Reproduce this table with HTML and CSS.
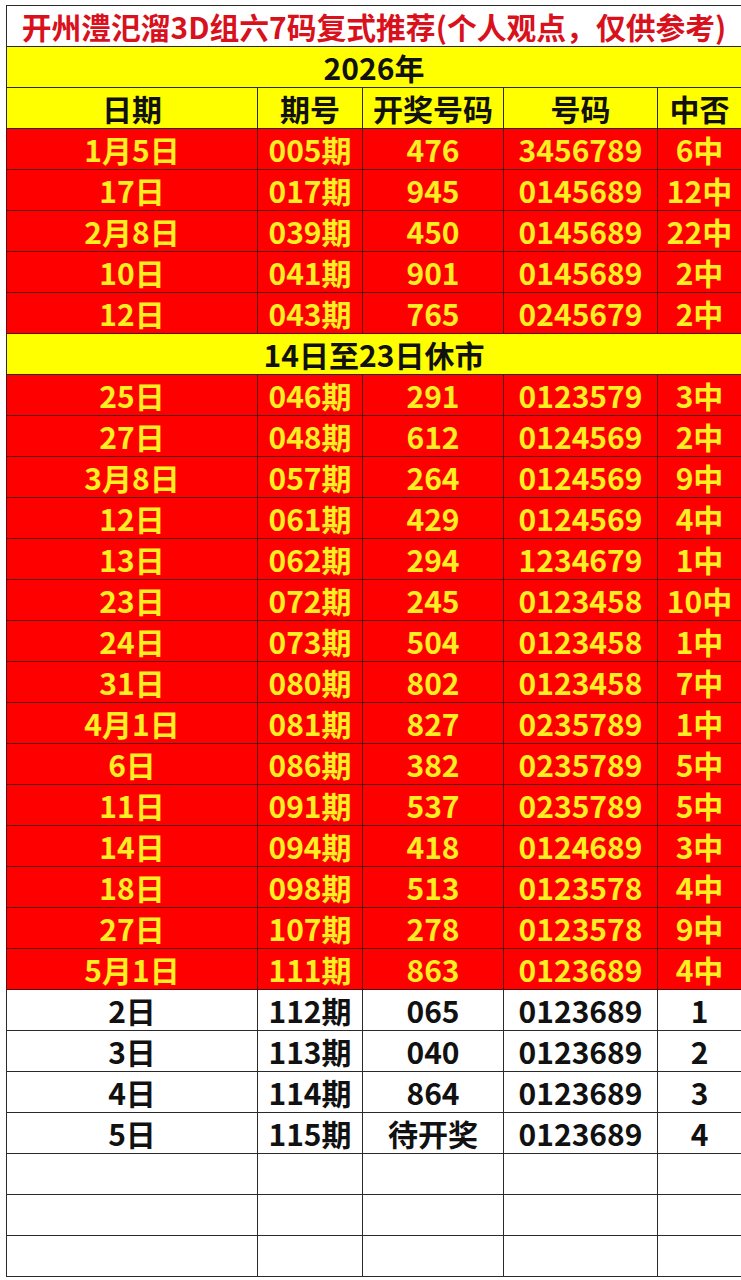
FILE: index.html
```html
<!DOCTYPE html>
<html lang="zh-CN">
<head>
<meta charset="utf-8">
<title>开州澧汜溜3D组六7码复式推荐</title>
<link rel="stylesheet" href="styles.css">
</head>
<body>
<table class="sheet">
  <colgroup>
    <col class="c1"><col class="c2"><col class="c3"><col class="c4"><col class="c5">
  </colgroup>
  <tr class="title"><td colspan="5">开州澧汜溜3D组六7码复式推荐(个人观点，仅供参考)</td></tr>
  <tr class="band"><td colspan="5">2026年</td></tr>
  <tr class="head"><td>日期</td><td>期号</td><td>开奖号码</td><td>号码</td><td>中否</td></tr>
  <tr class="hit"><td>1月5日</td><td>005期</td><td>476</td><td>3456789</td><td>6中</td></tr>
  <tr class="hit"><td>17日</td><td>017期</td><td>945</td><td>0145689</td><td>12中</td></tr>
  <tr class="hit"><td>2月8日</td><td>039期</td><td>450</td><td>0145689</td><td>22中</td></tr>
  <tr class="hit"><td>10日</td><td>041期</td><td>901</td><td>0145689</td><td>2中</td></tr>
  <tr class="hit"><td>12日</td><td>043期</td><td>765</td><td>0245679</td><td>2中</td></tr>
  <tr class="band"><td colspan="5">14日至23日休市</td></tr>
  <tr class="hit"><td>25日</td><td>046期</td><td>291</td><td>0123579</td><td>3中</td></tr>
  <tr class="hit"><td>27日</td><td>048期</td><td>612</td><td>0124569</td><td>2中</td></tr>
  <tr class="hit"><td>3月8日</td><td>057期</td><td>264</td><td>0124569</td><td>9中</td></tr>
  <tr class="hit"><td>12日</td><td>061期</td><td>429</td><td>0124569</td><td>4中</td></tr>
  <tr class="hit"><td>13日</td><td>062期</td><td>294</td><td>1234679</td><td>1中</td></tr>
  <tr class="hit"><td>23日</td><td>072期</td><td>245</td><td>0123458</td><td>10中</td></tr>
  <tr class="hit"><td>24日</td><td>073期</td><td>504</td><td>0123458</td><td>1中</td></tr>
  <tr class="hit"><td>31日</td><td>080期</td><td>802</td><td>0123458</td><td>7中</td></tr>
  <tr class="hit"><td>4月1日</td><td>081期</td><td>827</td><td>0235789</td><td>1中</td></tr>
  <tr class="hit"><td>6日</td><td>086期</td><td>382</td><td>0235789</td><td>5中</td></tr>
  <tr class="hit"><td>11日</td><td>091期</td><td>537</td><td>0235789</td><td>5中</td></tr>
  <tr class="hit"><td>14日</td><td>094期</td><td>418</td><td>0124689</td><td>3中</td></tr>
  <tr class="hit"><td>18日</td><td>098期</td><td>513</td><td>0123578</td><td>4中</td></tr>
  <tr class="hit"><td>27日</td><td>107期</td><td>278</td><td>0123578</td><td>9中</td></tr>
  <tr class="hit"><td>5月1日</td><td>111期</td><td>863</td><td>0123689</td><td>4中</td></tr>
  <tr class="plain"><td>2日</td><td>112期</td><td>065</td><td>0123689</td><td>1</td></tr>
  <tr class="plain"><td>3日</td><td>113期</td><td>040</td><td>0123689</td><td>2</td></tr>
  <tr class="plain"><td>4日</td><td>114期</td><td>864</td><td>0123689</td><td>3</td></tr>
  <tr class="plain"><td>5日</td><td>115期</td><td>待开奖</td><td>0123689</td><td>4</td></tr>
  <tr class="plain"><td></td><td></td><td></td><td></td><td></td></tr>
  <tr class="plain"><td></td><td></td><td></td><td></td><td></td></tr>
  <tr class="plain"><td></td><td></td><td></td><td></td><td></td></tr>
</table>
</body>
</html>
```

FILE: styles.css
```css
html, body {
  margin: 0;
  padding: 0;
  background: #ffffff;
}

body {
  padding: 5px 0 0 6px;
  font-family: "Noto Sans CJK SC", "Microsoft YaHei", sans-serif;
  font-weight: 700;
}

.sheet {
  border-collapse: collapse;
  table-layout: fixed;
  width: 735px;
}

.c1 { width: 251px; }
.c2 { width: 105px; }
.c3 { width: 141px; }
.c4 { width: 154px; }
.c5 { width: 84px; }

.sheet td {
  height: 40px;
  padding: 0;
  border: 1px solid #2a2a2a;
  text-align: center;
  vertical-align: middle;
  font-size: 30px;
  line-height: 40px;
  white-space: nowrap;
  overflow: hidden;
}

.title td {
  background: #ffffff;
  color: #d8111c;
  font-size: 29.8px;
  letter-spacing: 0;
}

.band td,
.head td {
  background: #ffff00;
  color: #111111;
}

.hit td {
  background: #ff0000;
  color: #ffee22;
  border-color: #5a1010;
}

.plain td {
  background: #ffffff;
  color: #111111;
}
```
